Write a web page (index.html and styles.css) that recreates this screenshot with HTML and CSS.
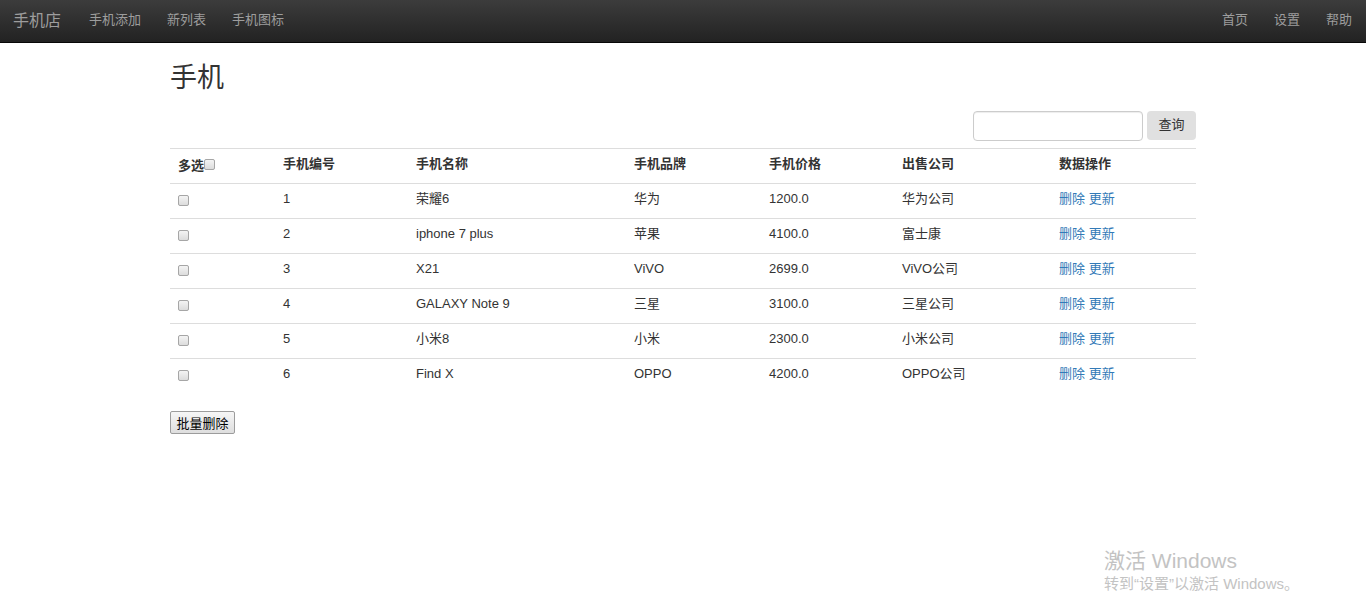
FILE: index.html
```html
<!DOCTYPE html>
<html lang="zh-CN">
<head>
<meta charset="utf-8">
<title>手机店</title>
<link rel="stylesheet" href="styles.css">
</head>
<body>
<nav class="navbar">
  <div class="nav-left">
    <a class="brand" href="#">手机店</a>
    <a class="nav-link" href="#">手机添加</a>
    <a class="nav-link" href="#">新列表</a>
    <a class="nav-link" href="#">手机图标</a>
  </div>
  <div class="nav-right">
    <a class="nav-link" href="#">首页</a>
    <a class="nav-link" href="#">设置</a>
    <a class="nav-link" href="#">帮助</a>
  </div>
</nav>
<main class="container">
  <h1 class="title">手机</h1>
  <form class="search">
    <input class="search-input" type="text">
    <button class="search-btn" type="button">查询</button>
  </form>
  <table class="phones">
    <colgroup>
      <col class="c1"><col class="c2"><col class="c3"><col class="c4"><col class="c5"><col class="c6"><col class="c7">
    </colgroup>
    <thead>
      <tr>
        <th class="multi">多选<input type="checkbox" class="cb cb-head"></th>
        <th>手机编号</th>
        <th>手机名称</th>
        <th>手机品牌</th>
        <th>手机价格</th>
        <th>出售公司</th>
        <th>数据操作</th>
      </tr>
    </thead>
    <tbody>
      <tr><td><input type="checkbox" class="cb"></td><td>1</td><td>荣耀6</td><td>华为</td><td>1200.0</td><td>华为公司</td><td><a href="#">删除</a> <a href="#">更新</a></td></tr>
      <tr><td><input type="checkbox" class="cb"></td><td>2</td><td>iphone 7 plus</td><td>苹果</td><td>4100.0</td><td>富士康</td><td><a href="#">删除</a> <a href="#">更新</a></td></tr>
      <tr><td><input type="checkbox" class="cb"></td><td>3</td><td>X21</td><td>ViVO</td><td>2699.0</td><td>ViVO公司</td><td><a href="#">删除</a> <a href="#">更新</a></td></tr>
      <tr><td><input type="checkbox" class="cb"></td><td>4</td><td>GALAXY Note 9</td><td>三星</td><td>3100.0</td><td>三星公司</td><td><a href="#">删除</a> <a href="#">更新</a></td></tr>
      <tr><td><input type="checkbox" class="cb"></td><td>5</td><td>小米8</td><td>小米</td><td>2300.0</td><td>小米公司</td><td><a href="#">删除</a> <a href="#">更新</a></td></tr>
      <tr><td><input type="checkbox" class="cb"></td><td>6</td><td>Find X</td><td>OPPO</td><td>4200.0</td><td>OPPO公司</td><td><a href="#">删除</a> <a href="#">更新</a></td></tr>
    </tbody>
  </table>
  <button class="batch-btn" type="button">批量删除</button>
</main>
<div class="watermark">
  <div class="wm-title">激活 Windows</div>
  <div class="wm-sub">转到“设置”以激活 Windows。</div>
</div>
</body>
</html>
```
FILE: styles.css
```css
* { box-sizing: border-box; }
html, body { margin: 0; padding: 0; }
body {
  font-family: "Liberation Sans", Arial, "Noto Sans CJK SC", sans-serif;
  font-size: 13px;
  color: #333;
  background: #fff;
  height: 596px;
  overflow: hidden;
  position: relative;
}
a { text-decoration: none; }

.navbar {
  height: 43px;
  background: linear-gradient(to bottom, #3c3c3c 0%, #222 100%);
  border-bottom: 1px solid #080808;
  display: flex;
  justify-content: space-between;
  align-items: center;
}
.nav-left, .nav-right { display: flex; align-items: center; height: 100%; }
.brand {
  color: #9d9d9d;
  font-size: 16px;
  padding: 0 15px 0 13px;
  line-height: 42px;
}
.nav-link {
  color: #9d9d9d;
  font-size: 13px;
  padding: 0 13px 3px;
  line-height: 39px;
}
.nav-right { padding-right: 1px; }

.container {
  width: 1026px;
  margin: 0 auto;
}
.title {
  font-size: 27px;
  font-weight: normal;
  line-height: 30px;
  margin: 20px 0 18px;
  color: #333;
}
.search {
  display: flex;
  justify-content: flex-end;
  gap: 4px;
  margin: 0 0 7px;
}
.search-input {
  width: 170px;
  height: 30px;
  border: 1px solid #ccc;
  border-radius: 4px;
  box-shadow: inset 0 1px 1px rgba(0,0,0,.075);
  padding: 4px 8px;
  font: inherit;
}
.search-btn {
  width: 49px;
  height: 29px;
  border: 0;
  border-radius: 4px;
  background: #e0e0e0;
  color: #333;
  font: inherit;
  font-size: 13px;
  padding: 0 0 4px;
}

.phones {
  width: 100%;
  border-collapse: collapse;
  table-layout: fixed;
  margin-bottom: 17px;
}
.c1 { width: 105px; }
.c2 { width: 133px; }
.c3 { width: 218px; }
.c4 { width: 135px; }
.c5 { width: 133px; }
.c6 { width: 157px; }
.c7 { width: 145px; }
.phones th, .phones td {
  text-align: left;
  padding: 6px 8px 10px;
  line-height: 18px;
  height: 35px;
  border-top: 1px solid #ddd;
  vertical-align: top;
  white-space: nowrap;
}
.phones th { font-weight: bold; }
.phones th.multi { padding-top: 8px; padding-bottom: 8px; }
.phones td a { color: #337ab7; }

.cb {
  -webkit-appearance: none;
  appearance: none;
  width: 11px;
  height: 11px;
  margin: 0;
  border: 1px solid #a6a6a6;
  border-radius: 2px;
  background: linear-gradient(#f4f4f4, #dcdcdc);
  vertical-align: middle;
  display: inline-block;
  position: relative;
  top: 1px;
}
.cb-head { top: -2px; }

.batch-btn {
  height: 23px;
  width: 65px;
  padding: 0;
  font: inherit;
  font-size: 13px;
  color: #000;
  background: linear-gradient(#f6f6f6, #dedede);
  border: 1px solid #9c9c9c;
  border-radius: 2px;
}

.watermark {
  position: absolute;
  left: 1104px;
  top: 547px;
  color: #c3c3c3;
}
.wm-title { font-size: 21px; line-height: 27px; }
.wm-sub { font-size: 15px; line-height: 20px; }
```
